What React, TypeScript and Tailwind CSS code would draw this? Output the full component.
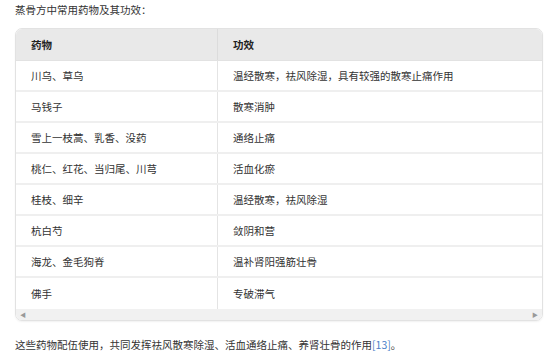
const ROWS = [
  { drug: "川乌、草乌", effect: "温经散寒，祛风除湿，具有较强的散寒止痛作用" },
  { drug: "马钱子", effect: "散寒消肿" },
  { drug: "雪上一枝蒿、乳香、没药", effect: "通络止痛" },
  { drug: "桃仁、红花、当归尾、川芎", effect: "活血化瘀" },
  { drug: "桂枝、细辛", effect: "温经散寒，祛风除湿" },
  { drug: "杭白芍", effect: "敛阴和营" },
  { drug: "海龙、金毛狗脊", effect: "温补肾阳强筋壮骨" },
  { drug: "佛手", effect: "专破滞气" },
];

export default function App() {
  return (
    <div
      className="w-[553px] h-[358px] bg-white text-[#333] text-[10.5px] overflow-hidden"
      style={{ fontFamily: '"Noto Sans CJK SC", "Noto Sans", sans-serif' }}
    >
      <p className="pl-[15px] pt-[3px] h-[28px] leading-[14px]">蒸骨方中常用药物及其功效：</p>

      <div className="ml-[15px] w-[528px] border border-[#e2e2e2] rounded-[7px] overflow-hidden shadow-[0_1px_2px_rgba(0,0,0,0.06)]">
        <div className="flex h-[32px] bg-[#e9e9e9] font-bold text-[#222] border-b border-[#e2e2e2]">
          <div className="w-[202px] shrink-0 flex items-center pl-[15px] border-r border-[#dcdcdc]">药物</div>
          <div className="flex-1 flex items-center pl-[15px]">功效</div>
        </div>
        {ROWS.map((r, i) => (
          <div
            key={r.drug}
            className={`flex h-[31px] ${i < ROWS.length - 1 ? "border-b-2 border-[#efefef]" : ""}`}
          >
            <div className="w-[202px] shrink-0 flex items-center pl-[15px] border-r border-[#e4e4e4]">{r.drug}</div>
            <div className="flex-1 flex items-center pl-[15px]">{r.effect}</div>
          </div>
        ))}
        <div className="flex h-[11px] items-center justify-between bg-[#f1f1f1] px-[4px] text-[6px] text-[#999]">
          <span>◀</span>
          <span>▶</span>
        </div>
      </div>

      <p className="pl-[15px] mt-[17px] leading-[14px]">
        这些药物配伍使用，共同发挥祛风散寒除湿、活血通络止痛、养肾壮骨的作用
        <span className="text-[#4a7fc8]">[13]</span>。
      </p>
    </div>
  );
}
